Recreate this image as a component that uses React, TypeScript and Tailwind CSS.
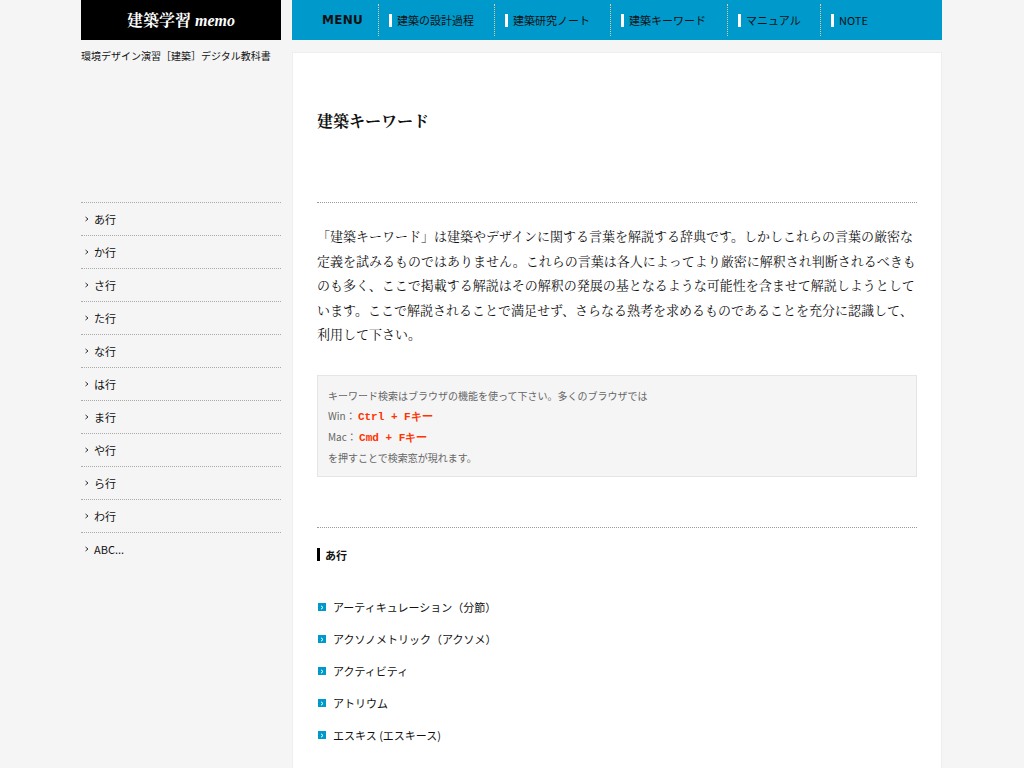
const navItems = ['建築の設計過程', '建築研究ノート', '建築キーワード', 'マニュアル', 'NOTE'];
const navWidths = ['w-[116px]', 'w-[116px]', 'w-[117px]', 'w-[93px]', 'w-[100px]'];
const sideItems = ['あ行', 'か行', 'さ行', 'た行', 'な行', 'は行', 'ま行', 'や行', 'ら行', 'わ行', 'ABC...'];
const words = ['アーティキュレーション（分節）', 'アクソノメトリック（アクソメ）', 'アクティビティ', 'アトリウム', 'エスキス (エスキース)'];

const sans = 'font-["Noto_Sans_CJK_JP","Liberation_Sans",sans-serif]';
const serif = 'font-["Noto_Serif_CJK_JP","Liberation_Serif","Noto_Sans_CJK_JP",serif]';

export default function App() {
  return (
    <div className={`min-h-screen bg-[#f5f5f5] ${sans} text-[#111]`}>
      <div className="ml-[81px] w-[861px]">
        <header className="flex h-10 gap-[11px]">
          <div className={`flex w-[200px] items-center justify-center bg-black text-white ${serif}`}>
            <span className="text-[16px] font-bold">建築学習 <i className="font-['Liberation_Serif']">memo</i></span>
          </div>
          <nav className="flex flex-1 items-center bg-[#0099cc]">
            <span className="w-[86px] pl-[30px] text-[12px] font-bold tracking-wide text-[#111] font-['DejaVu_Sans']">MENU</span>
            {navItems.map((item, i) => (
              <a key={item} className={`${navWidths[i]} flex h-[32px] items-center border-l border-dotted border-[#e8c9a0] pl-[10px] text-[11px] text-[#111]`}>
                <span className="mr-[5px] h-[13px] w-[3px] bg-white" />
                {item}
              </a>
            ))}
          </nav>
        </header>

        <div className="mt-[10px] flex gap-[11px]">
          <aside className="w-[200px] shrink-0">
            <p className="text-[10px] leading-[12px]">環境デザイン演習［建築］デジタル教科書</p>
            <ul className="mt-[140px]">
              {sideItems.map((item) => (
                <li key={item} className="flex h-[33px] items-center gap-[4px] border-t border-dotted border-[#aaa] pl-[3px] text-[11px]">
                  <svg width="6" height="6" viewBox="0 0 6 6"><path d="M1.5 1 L4 3 L1.5 5" fill="none" stroke="#333" strokeWidth="1" /></svg>
                  {item}
                </li>
              ))}
            </ul>
          </aside>

          <main className="mt-[2px] min-h-[800px] flex-1 border border-[#eee] bg-white px-6">
            <h1 className={`mt-[58px] text-[16px] font-bold leading-[20px] ${serif}`}>建築キーワード</h1>
            <div className="mt-[71px] border-t border-dotted border-[#999]" />
            <p className={`mt-[21px] text-[13px] leading-[24.5px] ${serif}`}>
              「建築キーワード」は建築やデザインに関する言葉を解説する辞典です。しかしこれらの言葉の厳密な定義を試みるものではありません。これらの言葉は各人によってより厳密に解釈され判断されるべきものも多く、ここで掲載する解説はその解釈の発展の基となるような可能性を含ませて解説しようとしています。ここで解説されることで満足せず、さらなる熟考を求めるものであることを充分に認識して、利用して下さい。
            </p>
            <div className="mt-[28px] border border-[#e5e5e5] bg-[#f5f5f5] px-[10px] pt-[10px] pb-[8px] text-[10px] leading-[20px] text-[#666]">
              <p>キーワード検索はブラウザの機能を使って下さい。多くのブラウザでは</p>
              <p>Win：&nbsp;<span className="font-['Liberation_Mono'] text-[11px] font-bold text-[#ff3300]">Ctrl + Fキー</span></p>
              <p>Mac：&nbsp;<span className="font-['Liberation_Mono'] text-[11px] font-bold text-[#ff3300]">Cmd + Fキー</span></p>
              <p>を押すことで検索窓が現れます。</p>
            </div>
            <div className="mt-[50px] border-t border-dotted border-[#999]" />
            <h2 className="mt-[19px] flex items-center gap-[5px] text-[11px] font-bold">
              <span className="h-[13px] w-[3px] bg-black" />あ行
            </h2>
            <ul className="mt-[28px]">
              {words.map((w) => (
                <li key={w} className="flex h-[32px] items-center gap-[7px] pl-[1px] text-[11px]">
                  <span className="flex h-[8px] w-[8px] items-center justify-center bg-[#0099cc]">
                    <svg width="4" height="5" viewBox="0 0 4 5"><path d="M1 0.8 L3 2.5 L1 4.2" fill="none" stroke="#fff" strokeWidth="1" /></svg>
                  </span>
                  {w}
                </li>
              ))}
            </ul>
          </main>
        </div>
      </div>
    </div>
  );
}
